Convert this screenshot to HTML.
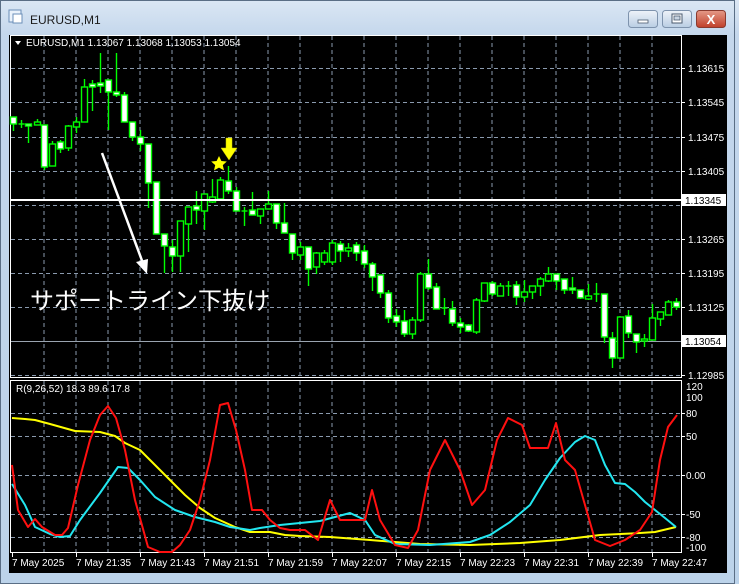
<!DOCTYPE html>
<html><head><meta charset="utf-8"><style>
html,body{margin:0;padding:0;width:739px;height:584px;overflow:hidden;background:#cfe0f1;font-family:"Liberation Sans","Noto Sans CJK JP",sans-serif}
</style></head><body>
<svg width="739" height="584" viewBox="0 0 739 584" xmlns="http://www.w3.org/2000/svg" font-family="Liberation Sans, Noto Sans CJK JP, sans-serif">
<defs>
<linearGradient id="frame" x1="0" y1="0" x2="0" y2="1"><stop offset="0" stop-color="#dbe7f4"/><stop offset="0.06" stop-color="#c4d7ec"/><stop offset="1" stop-color="#bcd3ea"/></linearGradient>
<linearGradient id="btn" x1="0" y1="0" x2="0" y2="1"><stop offset="0" stop-color="#eef3f9"/><stop offset="1" stop-color="#b9cde3"/></linearGradient>
<linearGradient id="cls" x1="0" y1="0" x2="0" y2="1"><stop offset="0" stop-color="#e59a88"/><stop offset="1" stop-color="#c0402a"/></linearGradient>
</defs>
<rect x="0" y="0" width="739" height="584" fill="url(#frame)"/>
<rect x="0.5" y="0.5" width="734" height="583" fill="none" stroke="#5a6e85"/>
<!-- title -->
<rect x="9" y="10" width="12" height="12" fill="#eaf2fb" stroke="#6b8fb8"/>
<rect x="13" y="14" width="9" height="9" fill="#fff" stroke="#6b8fb8"/>
<text x="30" y="24" font-size="12" fill="#1a1a1a">EURUSD,M1</text>
<rect x="628.5" y="10.5" width="29" height="17" rx="3" fill="url(#btn)" stroke="#7e93ad"/>
<rect x="638" y="20" width="10" height="3" fill="#fff" stroke="#4a5a6e" stroke-width="0.8"/>
<rect x="662.5" y="10.5" width="29" height="17" rx="3" fill="url(#btn)" stroke="#7e93ad"/>
<rect x="672" y="14" width="10" height="9" fill="#fff" stroke="#4a5a6e"/>
<rect x="674" y="16" width="6" height="4" fill="#c8d4e2" stroke="#4a5a6e" stroke-width="0.8"/>
<rect x="696.5" y="10.5" width="29" height="17" rx="3" fill="url(#cls)" stroke="#8a3a2e"/>
<text x="711" y="24" font-size="13" font-weight="bold" fill="#fff" text-anchor="middle">X</text>
<!-- chart bg -->
<rect x="9" y="35" width="718" height="538" fill="#000"/>
<g stroke="#8a9aae" stroke-width="1" stroke-dasharray="4,3">
<path d="M44 36V377M76 36V377M108 36V377M140 36V377M172 36V377M204 36V377M236 36V377M268 36V377M300 36V377M332 36V377M364 36V377M396 36V377M428 36V377M460 36V377M492 36V377M524 36V377M556 36V377M588 36V377M620 36V377M652 36V377"/>
<path d="M11 68.5H681M11 102.5H681M11 137.5H681M11 171.5H681M11 205.5H681M11 239.5H681M11 273.5H681M11 307.5H681M11 375.5H681"/>
<path d="M44 381V552M76 381V552M108 381V552M140 381V552M172 381V552M204 381V552M236 381V552M268 381V552M300 381V552M332 381V552M364 381V552M396 381V552M428 381V552M460 381V552M492 381V552M524 381V552M556 381V552M588 381V552M620 381V552M652 381V552"/>
<path d="M11 413.5H681M11 436.5H681M11 475.5H681M11 514.5H681M11 537.5H681"/>
</g>
<line x1="11" y1="341.5" x2="681" y2="341.5" stroke="#9aa4b0"/>
<rect x="10.5" y="35.5" width="671" height="342" fill="none" stroke="#fff"/>
<rect x="10.5" y="380.5" width="671" height="172" fill="none" stroke="#fff"/>
<!-- candles -->
<g id="c" stroke="#00ff00" stroke-width="1.4"></g>
<line x1="11" y1="200" x2="681" y2="200" stroke="#fff" stroke-width="2"/>
<!-- price axis -->
<g font-size="10" fill="#fff">
<text x="688" y="72">1.13615</text><text x="688" y="106">1.13545</text><text x="688" y="141">1.13475</text><text x="688" y="175">1.13405</text>
<text x="688" y="243">1.13265</text><text x="688" y="277">1.13195</text><text x="688" y="311">1.13125</text><text x="688" y="379">1.12985</text>
</g>
<rect x="682" y="194" width="44" height="12" fill="#fff"/><text x="685" y="204" font-size="10" fill="#000">1.13345</text>
<rect x="682" y="335" width="44" height="12" fill="#fff"/><text x="685" y="345" font-size="10" fill="#000">1.13054</text>
<g stroke="#fff"><path d="M682 68.5h3M682 102.5h3M682 137.5h3M682 171.5h3M682 239.5h3M682 273.5h3M682 307.5h3M682 375.5h3M682 413.5h3M682 436.5h3M682 475.5h3M682 514.5h3M682 537.5h3"/></g>
<g font-size="10" fill="#fff">
<text x="686" y="390">120</text><text x="686" y="401">100</text><text x="686" y="417">80</text><text x="686" y="440">50</text><text x="686" y="479">0.00</text><text x="686" y="518">-50</text><text x="686" y="541">-80</text><text x="686" y="551">-100</text>
</g>
<!-- header text -->
<path d="M15 41l6 0-3 4z" fill="#fff"/>
<text x="26" y="46" font-size="10" fill="#fff">EURUSD,M1  1.13067 1.13068 1.13053 1.13054</text>
<text x="16" y="392" font-size="10" fill="#fff">R(9,26,52) 18.3 89.6 17.8</text>
<!-- time axis -->
<g font-size="10" fill="#fff">
<text x="12" y="566">7 May 2025</text><text x="76" y="566">7 May 21:35</text><text x="140" y="566">7 May 21:43</text><text x="204" y="566">7 May 21:51</text><text x="268" y="566">7 May 21:59</text><text x="332" y="566">7 May 22:07</text><text x="396" y="566">7 May 22:15</text><text x="460" y="566">7 May 22:23</text><text x="524" y="566">7 May 22:31</text><text x="588" y="566">7 May 22:39</text><text x="652" y="566">7 May 22:47</text>
</g>
<g stroke="#fff"><path d="M12.5 553v4M76.5 553v4M140.5 553v4M204.5 553v4M268.5 553v4M332.5 553v4M396.5 553v4M460.5 553v4M524.5 553v4M588.5 553v4M652.5 553v4"/></g>
<!-- indicator lines -->
<g fill="none" stroke-width="2" stroke-linejoin="round">
<polyline stroke="#ffff00" points="12,418 25,419 35,420 50,424 75,431 100,432 115,436 125,443 140,450 155,465 170,480 185,495 200,508 215,518 235,527 250,532 270,532 285,535 300,536 330,537 370,540 420,544 470,545 520,543 560,540 600,535 640,533 655,532 676,527"/>
<polyline stroke="#22e6f0" points="12,484 25,505 35,527 50,534 60,537 70,536 80,520 100,493 118,467 128,468 140,480 155,497 175,510 195,517 215,522 230,527 250,530 260,528 280,525 320,521 350,513 365,520 375,535 395,544 430,545 470,542 490,535 510,522 530,505 545,480 560,458 575,442 585,436 595,440 605,465 615,483 625,484 635,492 645,502 655,510 665,518 676,527"/>
<polyline stroke="#ff1010" points="12,465 18,510 28,527 35,519 42,527 55,535 62,535 68,528 78,485 90,440 100,415 108,406 116,418 125,450 135,500 148,547 160,552 172,552 180,545 190,530 200,500 210,460 220,405 228,403 236,430 245,470 252,510 262,510 270,520 280,528 290,530 305,530 318,540 330,500 340,520 365,520 372,490 380,520 395,545 408,548 418,530 430,470 445,440 460,470 472,505 485,490 497,440 508,418 522,425 530,448 548,448 556,423 565,460 575,470 585,505 595,540 610,546 625,540 640,530 652,512 660,460 668,427 677,415"/>
</g>
<!-- annotation -->
<line x1="102" y1="153" x2="144" y2="266" stroke="#fff" stroke-width="2.5"/>
<path d="M136 262l11 12 1-15z" fill="#fff"/>
<text x="30" y="309" font-size="24" fill="#fff">サポートライン下抜け</text>
<path d="M219 156l2.4 5 5.4.5-4 3.6 1.2 5.3-5-2.8-5 2.8 1.2-5.3-4-3.6 5.4-.5z" fill="#ffff00"/>
<path d="M226 138h6v10h5l-8 12-8-12h5z" fill="#ffff00" stroke="#c8c800" stroke-width="0.5"/>
</svg>
<script>
var d=[[13,117,124,117,131,'W'],[21,124,124,120,128,'D'],[28,124,125,124,143,'W'],[37,122,125,119,125,'H'],[44,125,167,125,170,'W'],[52,144,166,141,166,'H'],[60,142,149,140,153,'W'],[68,126,148,125,151,'H'],[76,122,127,117,133,'H'],[84,87,122,79,122,'H'],[92,84,87,80,111,'W'],[100,83,86,53,93,'W'],[108,80,92,80,130,'W'],[116,92,95,53,97,'W'],[124,95,122,92,122,'W'],[132,122,137,122,141,'W'],[140,137,144,130,151,'W'],[148,144,183,144,208,'W'],[156,182,234,182,234,'W'],[164,234,246,234,273,'W'],[172,247,256,240,272,'W'],[180,221,256,221,272,'H'],[188,207,224,207,252,'H'],[196,206,210,191,224,'W'],[204,194,211,194,230,'H'],[212,197,202,179,203,'H'],[220,180,199,177,199,'H'],[228,181,191,166,194,'W'],[236,191,211,187,211,'W'],[244,211,211,207,226,'D'],[252,210,215,192,215,'W'],[260,209,216,209,224,'H'],[268,204,209,191,209,'H'],[276,204,223,204,229,'W'],[284,223,233,203,233,'W'],[292,234,253,234,260,'W'],[300,247,255,242,260,'H'],[308,247,269,247,286,'W'],[316,253,267,252,274,'H'],[324,253,262,250,265,'H'],[332,243,262,240,265,'H'],[340,244,251,241,262,'W'],[348,248,251,243,257,'H'],[356,245,253,242,261,'W'],[364,251,264,245,268,'W'],[372,264,277,262,291,'W'],[380,275,293,275,298,'W'],[388,293,318,290,323,'W'],[396,316,322,309,327,'W'],[404,321,334,310,337,'W'],[412,320,334,317,339,'H'],[420,274,320,272,322,'H'],[428,274,288,259,290,'W'],[436,287,309,283,309,'W'],[444,308,308,298,315,'D'],[452,309,323,301,326,'W'],[460,323,327,318,333,'W'],[468,325,331,324,332,'W'],[476,300,332,298,334,'H'],[484,283,301,283,302,'H'],[492,283,294,281,296,'W'],[500,286,296,283,296,'H'],[508,286,286,281,296,'D'],[516,285,297,281,305,'W'],[524,292,297,280,302,'H'],[532,286,292,286,299,'H'],[540,279,286,277,296,'H'],[548,274,281,267,282,'H'],[556,274,281,274,290,'W'],[564,279,290,279,294,'W'],[572,288,290,277,294,'W'],[580,290,298,290,299,'W'],[588,296,299,284,300,'H'],[596,294,294,283,302,'D'],[604,294,337,294,343,'W'],[612,338,358,332,368,'W'],[620,317,358,317,358,'H'],[628,316,333,310,338,'W'],[636,334,342,334,353,'W'],[644,339,341,334,347,'H'],[652,318,340,304,340,'H'],[660,312,319,312,326,'H'],[668,302,315,300,315,'H'],[676,302,307,298,310,'W']];
var s='';d.forEach(function(c){var x=c[0]+0.5;s+='<line x1="'+x+'" y1="'+c[3]+'" x2="'+x+'" y2="'+c[4]+'"/>';if(c[5]=='D'){s+='<line x1="'+(x-3)+'" y1="'+c[1]+'" x2="'+(x+3)+'" y2="'+c[1]+'"/>';}else{s+='<rect x="'+(x-3)+'" y="'+c[1]+'" width="6" height="'+Math.max(2,c[2]-c[1])+'" fill="'+(c[5]=='W'?'#fff':'#000')+'"/>';}});
document.getElementById('c').innerHTML=s;
</script>
</body></html>
